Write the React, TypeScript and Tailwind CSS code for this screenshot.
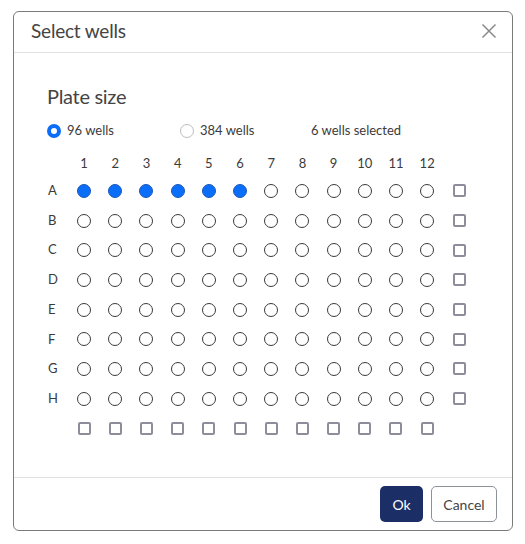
import React from "react";

const COLS = [1, 2, 3, 4, 5, 6, 7, 8, 9, 10, 11, 12];
const ROWS = ["A", "B", "C", "D", "E", "F", "G", "H"];

function Well({ on }: { on: boolean }) {
  return on ? (
    <div className="w-[14px] h-[14px] rounded-full bg-[#0a6ef8] border border-[#1d58b8]" />
  ) : (
    <div className="w-[14px] h-[14px] rounded-full bg-white border border-[#3a3a3a]" />
  );
}

function Box() {
  return <div className="w-[13px] h-[13px] rounded-[2px] border-2 border-[#8f8c9c] bg-white" />;
}

export default function App() {
  return (
    <div
      className="w-[525px] h-[544px] bg-white relative text-[#3b3b3b]"
      style={{ fontFamily: "Lato, 'Noto Sans', sans-serif" }}
    >
      <div className="absolute left-[13px] top-[11px] w-[500px] h-[520px] border border-[#7a7a7a] rounded-[6px] bg-white flex flex-col">
        <div className="h-[41px] shrink-0 border-b border-[#e2e2e6] flex items-center justify-between pl-[17px] pr-[15px] pb-[3px]">
          <div className="text-[19px] leading-none text-[#444] tracking-[-0.2px]">Select wells</div>
          <svg width="16" height="16" viewBox="0 0 16 16" className="mr-0">
            <path d="M1.5 1.5 L14.5 14.5 M14.5 1.5 L1.5 14.5" stroke="#8a8a8a" strokeWidth="1.5" fill="none" />
          </svg>
        </div>

        <div className="flex-1 pl-[33px] pt-[29px]">
          <div className="text-[20px] leading-[28px] text-[#444] tracking-[-0.3px]">Plate size</div>
          <div className="flex items-center h-[22px] mt-[10px] text-[13px]">
            <div className="flex items-center w-[133px]">
              <div className="w-[14px] h-[14px] rounded-full border-[4px] border-[#0a6ef8] bg-white" />
              <span className="ml-[6px]">96 wells</span>
            </div>
            <div className="flex items-center w-[131px]">
              <div className="w-[14px] h-[14px] rounded-full border border-[#bdbdbd] bg-white" />
              <span className="ml-[6px]">384 wells</span>
            </div>
            <span>6 wells selected</span>
          </div>

          <div className="mt-[10px] text-[13px]">
            <div className="flex items-center h-[24px]">
              <div className="w-[21.5px]" />
              {COLS.map((c) => (
                <div key={c} className="w-[31.2px] text-center">
                  {c}
                </div>
              ))}
            </div>
            {ROWS.map((r, ri) => (
              <div key={r} className="flex items-center h-[29.7px]">
                <div className="w-[21.5px] pl-[1px]">{r}</div>
                {COLS.map((c) => (
                  <div key={c} className="w-[31.2px] flex justify-center">
                    <Well on={ri === 0 && c <= 6} />
                  </div>
                ))}
                <div className="flex pl-[10px]">
                  <Box />
                </div>
              </div>
            ))}
            <div className="flex items-center h-[29.7px]">
              <div className="w-[21.5px]" />
              {COLS.map((c) => (
                <div key={c} className="w-[31.2px] flex justify-center">
                  <Box />
                </div>
              ))}
            </div>
          </div>
        </div>

        <div className="h-[53px] shrink-0 border-t border-[#e2e2e6] flex items-start justify-end gap-[8px] pt-[8px] pr-[15px]">
          <button className="w-[43px] h-[36px] rounded-[5px] bg-[#1b2e65] text-white text-[14px]">Ok</button>
          <button className="w-[66px] h-[36px] rounded-[5px] border border-[#8c919a] bg-white text-[#444] text-[14px]">
            Cancel
          </button>
        </div>
      </div>
    </div>
  );
}
